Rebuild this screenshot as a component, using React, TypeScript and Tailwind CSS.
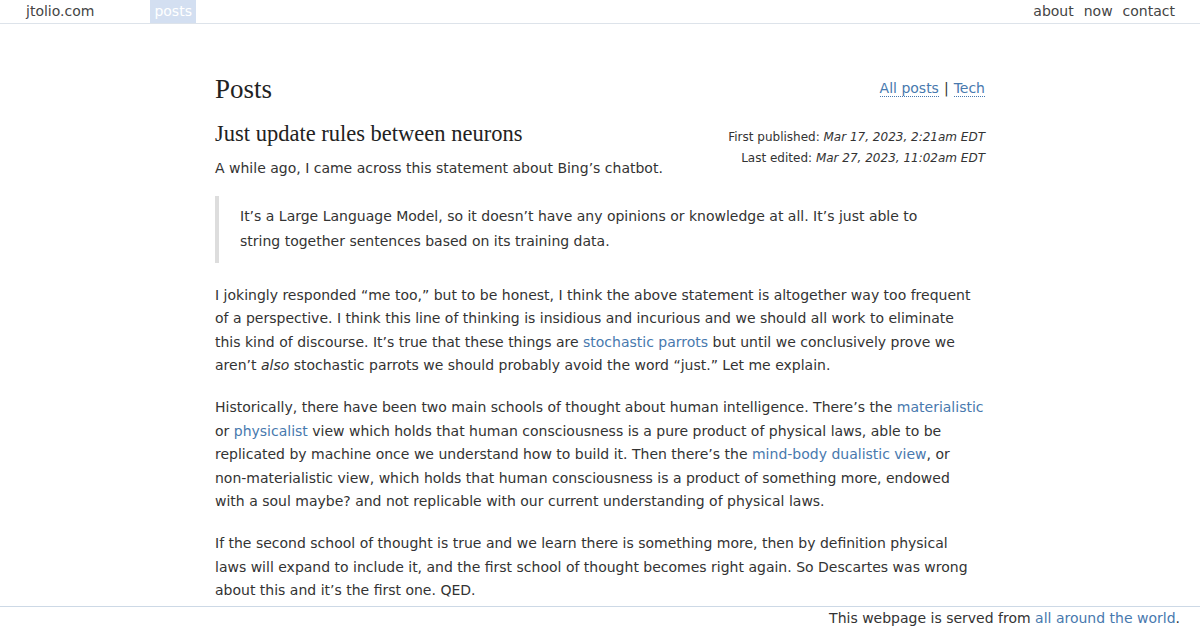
const sans = { fontFamily: '"DejaVu Sans", Verdana, sans-serif' };

const A = ({ children }: { children: React.ReactNode }) => (
  <a href="#" className="text-[#4879ae]">
    {children}
  </a>
);

export default function App() {
  return (
    <div
      className="flex flex-col h-[630px] overflow-hidden bg-white text-[#333]"
      style={sans}
    >
      <header className="flex items-center justify-between h-[24px] border-b border-[#dde3ea] text-[14px] text-[#444]">
        <div className="flex items-center h-full">
          <a href="#" className="ml-[26px]">jtolio.com</a>
          <a href="#" className="ml-[56px] h-full flex items-center px-[4px] bg-[#d3dff1] text-white">
            posts
          </a>
        </div>
        <nav className="flex gap-[10px] mr-[25px]">
          <a href="#">about</a>
          <a href="#">now</a>
          <a href="#">contact</a>
        </nav>
      </header>

      <main className="flex-1 overflow-hidden">
        <div className="w-[770px] mx-auto pt-[49px] text-[14px] leading-[23.5px]">
          <div className="flex items-center justify-between">
            <h1 className="text-[27px] leading-[32px] font-['Liberation_Serif',serif] text-[#222]">Posts</h1>
            <div>
              <a href="#" className="text-[#4879ae] border-b border-dotted border-[#4879ae]">All posts</a>
              <span className="mx-[5px]">|</span>
              <a href="#" className="text-[#4879ae] border-b border-dotted border-[#4879ae]">Tech</a>
            </div>
          </div>

          <div className="flex justify-between mt-[14px]">
            <div>
              <h2 className="text-[22.5px] leading-[30px] font-['Liberation_Serif',serif] text-[#222]">
                Just update rules between neurons
              </h2>
              <p className="mt-[8px]">A while ago, I came across this statement about Bing’s chatbot.</p>
            </div>
            <div className="text-right text-[12px] leading-[21px] pt-[7.5px]">
              <div>First published: <i>Mar 17, 2023, 2:21am EDT</i></div>
              <div>Last edited: <i>Mar 27, 2023, 11:02am EDT</i></div>
            </div>
          </div>

          <blockquote className="mt-[15px] mr-[40px] border-l-[4px] border-[#ddd] pl-[21px] py-[8.5px] leading-[25px]">
            It’s a Large Language Model, so it doesn’t have any opinions or knowledge at all. It’s just able to
            <br />
            string together sentences based on its training data.
          </blockquote>

          <p className="mt-[21px]">
            I jokingly responded “me too,” but to be honest, I think the above statement is altogether way too frequent
            <br />
            of a perspective. I think this line of thinking is insidious and incurious and we should all work to eliminate
            <br />
            this kind of discourse. It’s true that these things are <A>stochastic parrots</A> but until we conclusively prove we
            <br />
            aren’t <i>also</i> stochastic parrots we should probably avoid the word “just.” Let me explain.
          </p>

          <p className="mt-[18.5px]">
            Historically, there have been two main schools of thought about human intelligence. There’s the <A>materialistic</A>
            <br />
            or <A>physicalist</A> view which holds that human consciousness is a pure product of physical laws, able to be
            <br />
            replicated by machine once we understand how to build it. Then there’s the <A>mind-body dualistic view</A>, or
            <br />
            non-materialistic view, which holds that human consciousness is a product of something more, endowed
            <br />
            with a soul maybe? and not replicable with our current understanding of physical laws.
          </p>

          <p className="mt-[18.5px]">
            If the second school of thought is true and we learn there is something more, then by definition physical
            <br />
            laws will expand to include it, and the first school of thought becomes right again. So Descartes was wrong
            <br />
            about this and it’s the first one. QED.
          </p>
        </div>
      </main>

      <footer className="h-[24px] border-t border-[#cdd9e6] flex items-center justify-end pr-[20px] text-[14px]">
        <span>
          This webpage is served from <A>all around the world</A>.
        </span>
      </footer>
    </div>
  );
}
